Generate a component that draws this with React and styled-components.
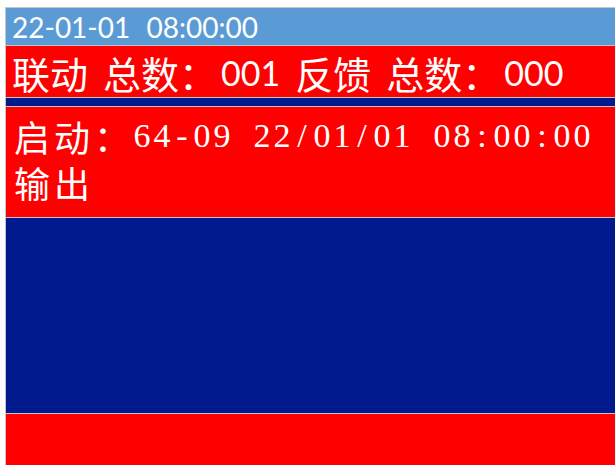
import React from 'react'
import styled, { createGlobalStyle } from 'styled-components'

const GlobalStyle = createGlobalStyle`
  html, body {
    margin: 0;
    padding: 0;
    background: #fff;
    overflow: hidden;
  }
  body {
    font-family: Lato, "Noto Sans CJK SC", sans-serif;
  }
`

const Screen = styled.div`
  margin: 7px 0 0 5px;
  border-top: 1px solid #c6c6c6;
  border-left: 1px solid #c6c6c6;
  display: flex;
  flex-direction: column;
  height: 470px;
  color: #fff;
`

const Band = styled.div`
  flex: ${p => (p.$grow ? 1 : 'none')};
  height: ${p => (p.$h ? `${p.$h}px` : 'auto')};
  background: ${p => p.$bg};
  border-bottom: 1px solid #c3c3cc;
  box-sizing: content-box;
`

const ClockBar = styled(Band)`
  display: flex;
  align-items: center;
  padding-left: 6px;
  font-family: Lato, sans-serif;
  font-size: 28px;
  white-space: pre;
  word-spacing: 1px;
`

const CountRow = styled(Band)`
  display: flex;
  align-items: center;
  padding-left: 6px;
  padding-top: 3px;
  height: 48px;
`

const Label = styled.span`
  font-family: "Noto Sans CJK SC", sans-serif;
  font-size: 38px;
  line-height: 46px;
  margin-left: ${p => (p.$gap ? '15px' : '0')};
`

const Num = styled.span`
  font-family: Lato, sans-serif;
  font-size: 34px;
  line-height: 46px;
  margin-left: ${p => (p.$gap ? '12px' : '4px')};
`

const EventBox = styled(Band)`
  padding: 6px 0 0 6px;
  height: 104px;
`

const Line = styled.div`
  display: flex;
  height: 46px;
  align-items: center;
  white-space: nowrap;
`

const WideCell = styled.span`
  display: inline-block;
  width: 40px;
  text-align: center;
  font-family: "Noto Sans CJK SC", sans-serif;
  font-size: 36px;
  line-height: 46px;
`

const HalfCell = styled.span`
  display: inline-block;
  width: 20px;
  text-align: center;
  font-family: "Liberation Serif", serif;
  font-size: 34px;
  line-height: 46px;
`

const Grid = ({ text }) => (
  <Line>
    {Array.from(text).map((ch, i) =>
      ch.charCodeAt(0) < 128
        ? <HalfCell key={i}>{ch === ' ' ? '\u00a0' : ch}</HalfCell>
        : <WideCell key={i}>{ch}</WideCell>
    )}
  </Line>
)

export default function App() {
  return (
    <>
      <GlobalStyle />
      <Screen>
        <ClockBar $bg="#5b9bd5" $h={37}>22-01-01  08:00:00</ClockBar>
        <CountRow $bg="#ff0000">
          <Label>联动</Label>
          <Label $gap>总数：</Label>
          <Num>001</Num>
          <Label $gap>反馈</Label>
          <Label $gap>总数：</Label>
          <Num>000</Num>
        </CountRow>
        <Band $bg="#00198c" $h={8} />
        <EventBox $bg="#ff0000">
          <Grid text="启动：64-09 22/01/01 08:00:00" />
          <Grid text="输出" />
        </EventBox>
        <Band $bg="#00198c" $h={195} />
        <Band $bg="#ff0000" $grow />
      </Screen>
    </>
  )
}
